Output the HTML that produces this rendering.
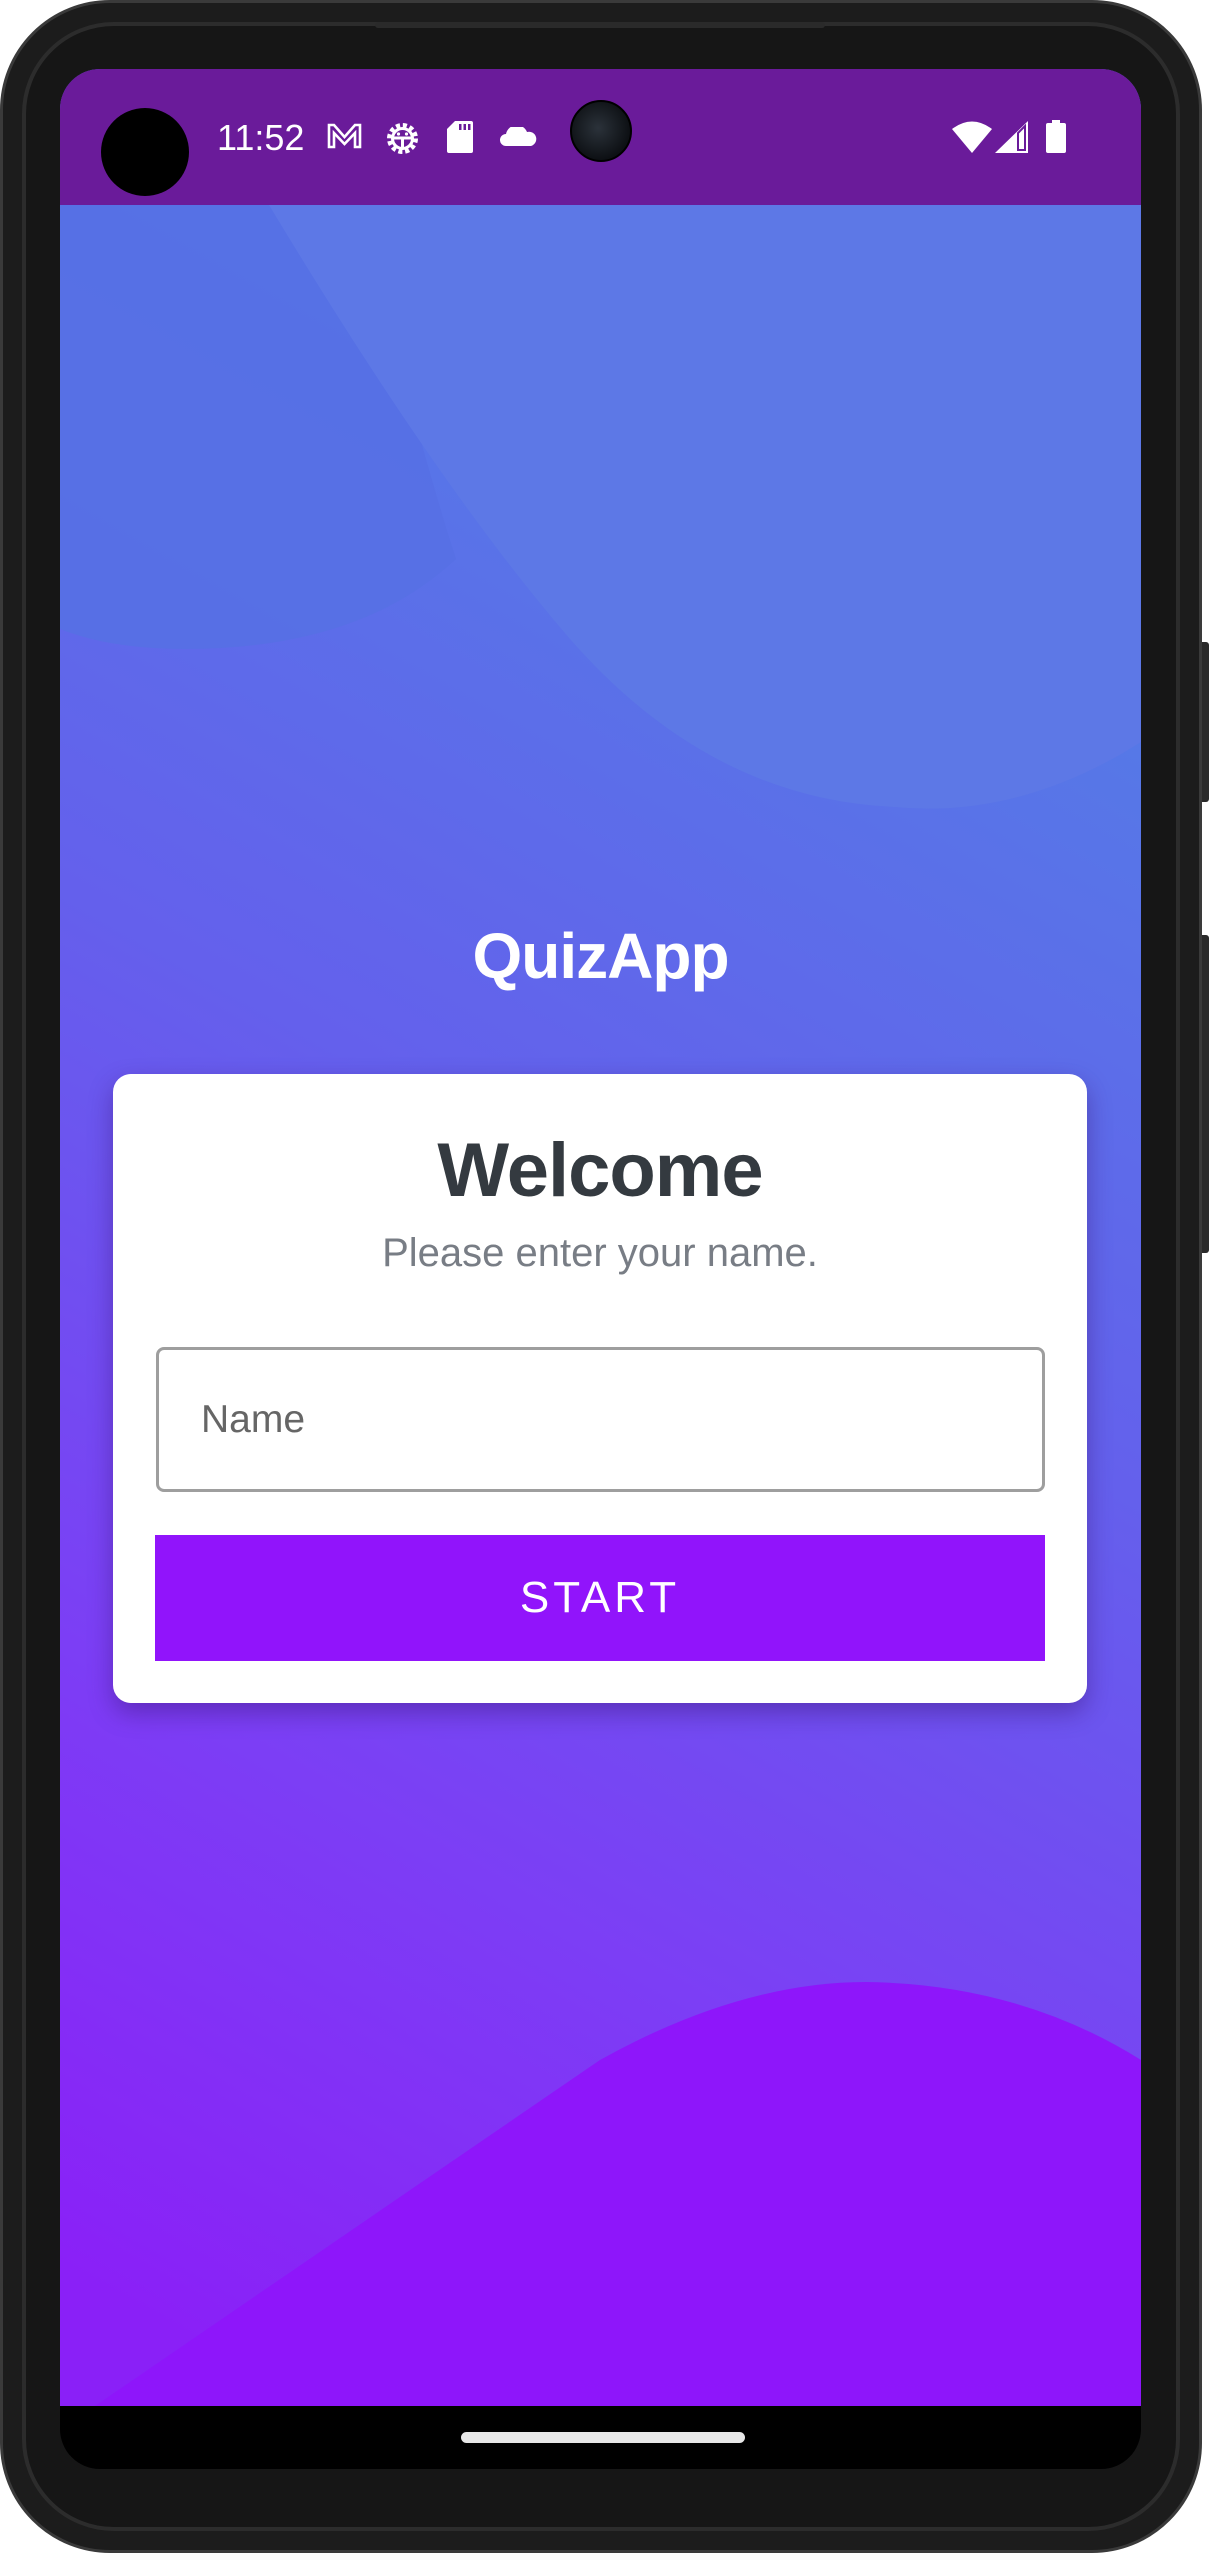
<!DOCTYPE html>
<html><head><meta charset="utf-8"><style>
*{margin:0;padding:0;box-sizing:border-box}
html,body{width:1209px;height:2553px;background:#fff;overflow:hidden;font-family:"Liberation Sans",sans-serif}
.abs{position:absolute}
</style></head><body>
<div class="abs" style="left:1196px;top:642px;width:13px;height:160px;background:#2a2a2a;border-radius:3px"></div>
<div class="abs" style="left:1196px;top:935px;width:13px;height:318px;background:#2a2a2a;border-radius:3px"></div>
<div class="abs" style="left:0;top:0;width:1202px;height:2553px;background:#1c1c1c;border-radius:110px;border:3px solid #3a3a3a"></div>
<div class="abs" style="left:22px;top:22px;width:1158px;height:2509px;border-radius:92px;border:4px solid #2c2c2c;background:#161616"></div>
<div class="abs" style="left:375px;top:22px;width:450px;height:6px;background:#2a2a2a;border-radius:3px"></div>
<div class="abs" style="left:60px;top:69px;width:1081px;height:2400px;border-radius:40px;overflow:hidden;background:#000">
<svg class="abs" style="left:0;top:0" width="1081" height="2337" viewBox="0 0 1081 2337">
<defs>
<linearGradient id="bg" gradientUnits="userSpaceOnUse" x1="1081" y1="300" x2="0" y2="2200">
<stop offset="0" stop-color="#4f84e4"/>
<stop offset="0.45" stop-color="#6460ec"/>
<stop offset="0.75" stop-color="#7c3ef5"/>
<stop offset="1" stop-color="#8a20f7"/>
</linearGradient>
</defs>
<rect x="0" y="0" width="1081" height="2337" fill="url(#bg)"/>
<path d="M0 136 L300 136 Q360 380 396 490 Q300 580 125 580 Q50 580 0 560 Z" fill="#5670e4" opacity="0.9"/>
<path d="M209 136 L1081 136 L1081 673 Q960 750 834 738 Q650 730 510 570 Q380 420 209 136 Z" fill="#5d78e6"/>
<path d="M35 2337 L540 1991 Q680 1913 806 1913 Q960 1915 1081 1991 L1081 2337 Z" fill="#8e16fa"/>
</svg>
<div class="abs" style="left:0;top:0;width:1081px;height:136px;background:#6a1b9a"></div>
<div class="abs" style="left:41px;top:39px;width:88px;height:88px;border-radius:50%;background:#000"></div>
<div class="abs" style="left:510px;top:31px;width:62px;height:62px;border-radius:50%;background:radial-gradient(circle at 45% 45%,#2b323a,#0d1014 70%);border:2px solid #000"></div>
<div class="abs" style="left:157px;top:49px;color:#fff;font-size:36px;line-height:40px">11:52</div>
<svg class="abs" style="left:267px;top:54px" width="35" height="26" viewBox="0 0 35 26"><path d="M2 24V2h5l10.5 12L28 2h5v22h-5V10l-10.5 11L7 10v14z" fill="none" stroke="#fff" stroke-width="2.6"/></svg>
<svg class="abs" style="left:324px;top:52px" width="37" height="35" viewBox="0 0 37 35"><circle cx="18.5" cy="17.5" r="13" fill="none" stroke="#fff" stroke-width="5" stroke-dasharray="4 2.8"/><circle cx="18.5" cy="17.5" r="10" fill="none" stroke="#fff" stroke-width="3"/><path d="M10 17h17M18.5 17v10" stroke="#fff" stroke-width="3"/><circle cx="14.5" cy="13" r="1.6" fill="#fff"/><circle cx="22.5" cy="13" r="1.6" fill="#fff"/></svg>
<svg class="abs" style="left:387px;top:52px" width="26" height="32" viewBox="0 0 26 32"><path d="M8 0H24a2 2 0 0 1 2 2V30a2 2 0 0 1-2 2H2a2 2 0 0 1-2-2V8z" fill="#fff"/><rect x="12" y="3" width="2.5" height="6" fill="#6a1b9a"/><rect x="16.5" y="3" width="2.5" height="6" fill="#6a1b9a"/><rect x="21" y="3" width="2.5" height="6" fill="#6a1b9a"/></svg>
<svg class="abs" style="left:440px;top:58px" width="37" height="19" viewBox="0 0 37 19"><path d="M6 19a6 6 0 0 1 0-12 a11 11 0 0 1 21-2 a7 7 0 0 1 4 14z" fill="#fff"/></svg>
<svg class="abs" style="left:892px;top:51px" width="40" height="33" viewBox="0 0 40 33"><path d="M20 33L0 9Q20 -6 40 9z" fill="#fff"/></svg>
<svg class="abs" style="left:935px;top:52px" width="33" height="32" viewBox="0 0 33 32"><path d="M0 32L33 0V32z" fill="#fff"/><path d="M23 29V12l7-7V29z" fill="none" stroke="#6a1b9a" stroke-width="2"/></svg>
<svg class="abs" style="left:986px;top:51px" width="20" height="33" viewBox="0 0 20 33"><rect x="6" y="0" width="8" height="4" fill="#fff"/><rect x="0" y="3" width="20" height="30" rx="2" fill="#fff"/></svg>
<div class="abs" style="left:0;top:847px;width:1081px;text-align:center;color:#fff;font-weight:bold;font-size:64px;letter-spacing:-1px;line-height:80px">QuizApp</div>
<div class="abs" style="left:53px;top:1005px;width:974px;height:629px;background:#fff;border-radius:18px;box-shadow:0 10px 24px rgba(60,20,120,0.45)">
<div class="abs" style="left:0;top:47px;width:974px;text-align:center;color:#343a40;font-weight:bold;font-size:76px;letter-spacing:-1px;line-height:100px">Welcome</div>
<div class="abs" style="left:0;top:154px;width:974px;text-align:center;color:#787d85;font-size:40px;line-height:50px">Please enter your name.</div>
<div class="abs" style="left:43px;top:273px;width:889px;height:145px;border:3px solid #9e9e9e;border-radius:8px"></div>
<div class="abs" style="left:88px;top:321px;color:#666;font-size:39px;line-height:50px">Name</div>
<div class="abs" style="left:42px;top:461px;width:890px;height:126px;background:#9114fb;color:#fff;font-size:44px;letter-spacing:4px;text-align:center;line-height:126px">START</div>
</div>
<div class="abs" style="left:401px;top:2363px;width:284px;height:11px;border-radius:6px;background:#e8e8e8"></div>
</div>
</body></html>
